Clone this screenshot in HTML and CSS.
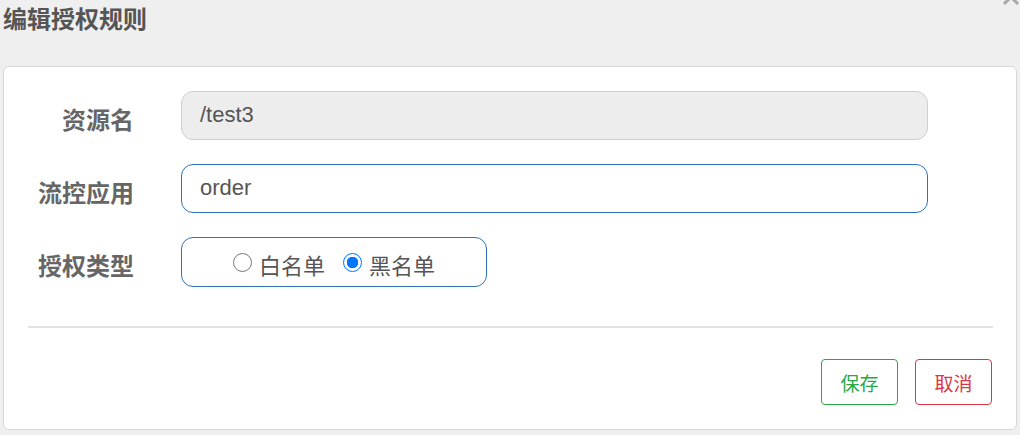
FILE: index.html
```html
<!DOCTYPE html>
<html lang="zh">
<head>
<meta charset="utf-8">
<title>编辑授权规则</title>
<link rel="stylesheet" href="styles.css">
</head>
<body>
<div class="dialog">
  <div class="header">
    <h1 class="title">编辑授权规则</h1>
    <svg class="close" width="20" height="20" viewBox="0 0 20 20" aria-label="关闭">
      <path d="M3 3 L17 17 M17 3 L3 17" stroke="#a8a8a8" stroke-width="3" fill="none"/>
    </svg>
  </div>
  <div class="card">
    <div class="form">
      <div class="row">
        <label class="label">资源名</label>
        <div class="field disabled">/test3</div>
      </div>
      <div class="row">
        <label class="label">流控应用</label>
        <div class="field">order</div>
      </div>
      <div class="row">
        <label class="label">授权类型</label>
        <div class="field radios">
          <span class="radio"><span class="dot"></span><span class="rtext">白名单</span></span>
          <span class="radio checked"><span class="dot"></span><span class="rtext">黑名单</span></span>
        </div>
      </div>
    </div>
    <div class="divider"></div>
    <div class="actions">
      <button class="btn save">保存</button>
      <button class="btn cancel">取消</button>
    </div>
  </div>
</div>
</body>
</html>
```
FILE: styles.css
```css
html, body {
  margin: 0;
  padding: 0;
  background: #efefef;
  font-family: "Liberation Sans", "Noto Sans CJK SC", sans-serif;
  overflow: hidden;
}
.dialog {
  width: 1020px;
  height: 435px;
  position: relative;
}
.header {
  height: 66px;
  position: relative;
}
.title {
  margin: 0;
  padding: 1px 0 0 3px;
  font-family: "Noto Sans CJK SC", sans-serif;
  font-size: 24px;
  font-weight: 700;
  line-height: 34px;
  color: #555;
}
.close {
  position: absolute;
  right: -1px;
  top: -13px;
}
.card {
  margin-left: 3px;
  width: 1012px;
  height: 362px;
  background: #fff;
  border: 1px solid #d8d8d8;
  border-radius: 6px;
}
.form {
  display: flex;
  flex-direction: column;
  gap: 24px;
  padding-top: 24px;
}
.row {
  display: flex;
  align-items: center;
  gap: 47px;
}
.label {
  width: 130px;
  text-align: right;
  font-family: "Noto Sans CJK SC", sans-serif;
  font-size: 24px;
  font-weight: 700;
  color: #666;
  margin-top: 5px;
}
.field {
  box-sizing: border-box;
  width: 747px;
  height: 49px;
  border: 1px solid #2f72b5;
  border-radius: 12px;
  padding: 0 18px;
  display: flex;
  align-items: center;
  font-size: 22px;
  color: #555;
  padding-bottom: 2px;
}
.field.disabled {
  background: #ededed;
  border-color: #cfcfcf;
}
.field.radios {
  width: 306px;
  height: 50px;
  justify-content: center;
  gap: 18px;
  padding: 0;
}
.radio {
  display: inline-flex;
  align-items: center;
  gap: 7px;
}
.dot {
  box-sizing: border-box;
  width: 19px;
  height: 19px;
  border-radius: 50%;
  border: 1px solid #777;
  background: #fff;
}
.radio.checked .dot {
  border: 1.5px solid #0075ff;
  background: radial-gradient(circle, #0075ff 0 5.5px, #fff 6px);
}
.rtext {
  font-family: "Noto Sans CJK SC", sans-serif;
  font-size: 22px;
  color: #555;
  margin-top: 4px;
}
.divider {
  margin: 39px 23px 0 24px;
  height: 2px;
  background: #e3e3e3;
}
.actions {
  display: flex;
  justify-content: flex-end;
  gap: 17px;
  padding: 31px 24px 0 0;
}
.btn {
  box-sizing: border-box;
  width: 77px;
  height: 46px;
  background: #fff;
  border-radius: 4px;
  font-family: "Noto Sans CJK SC", sans-serif;
  font-size: 19px;
  padding: 0;
  cursor: pointer;
}
.btn.save {
  border: 1px solid #28a745;
  color: #28a745;
}
.btn.cancel {
  border: 1px solid #dc3545;
  color: #dc3545;
}
```
